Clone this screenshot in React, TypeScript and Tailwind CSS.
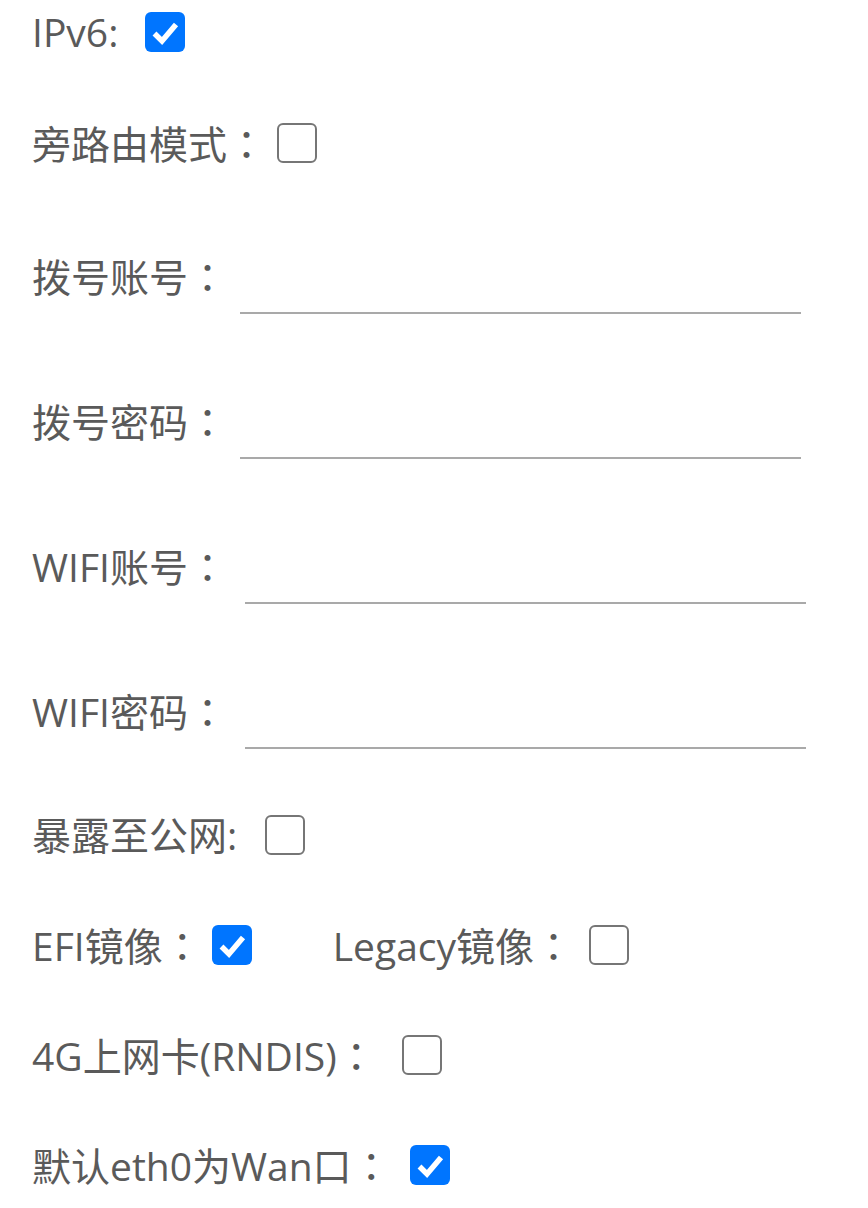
import React, { useState } from "react";

interface BoxProps {
  checked: boolean;
  onChange: () => void;
  className?: string;
}

function Box({ checked, onChange, className = "" }: BoxProps) {
  return (
    <button
      type="button"
      onClick={onChange}
      className={`inline-flex h-[40px] w-[40px] shrink-0 items-center justify-center rounded-[6px] ${
        checked ? "bg-[#0075ff]" : "border-[2.5px] border-[#767676] bg-white"
      } ${className}`}
    >
      {checked ? (
        <svg viewBox="0 0 40 40" className="h-[40px] w-[40px]" aria-hidden="true">
          <path
            d="M9.5 21.5 L17 29 L31 12.5"
            fill="none"
            stroke="#fff"
            strokeWidth="5.5"
            strokeLinejoin="miter"
          />
        </svg>
      ) : null}
    </button>
  );
}

// full-width colon drawn centred in its cell, like the original font does
const Colon = () => <span className="[font-family:'Noto_Sans_CJK_TC',sans-serif]">：</span>;

function TextRow({ label, labelWidth, className = "" }: { label: string; labelWidth: string; className?: string }) {
  return (
    <div className={`flex items-start ${className}`}>
      <span className={`leading-[44px] ${labelWidth}`}>
        {label}
        <Colon />
      </span>
      <input
        type="text"
        className="h-[61px] w-[561px] border-b-2 border-[#a9a9a9] bg-transparent outline-none"
      />
    </div>
  );
}

export default function App() {
  const [v, setV] = useState({
    ipv6: true,
    bypass: false,
    expose: false,
    efi: true,
    legacy: false,
    rndis: false,
    eth0: true,
  });
  const flip = (k: keyof typeof v) => setV((s) => ({ ...s, [k]: !s[k] }));

  return (
    <div className="flex min-h-[1208px] flex-col bg-white pl-[32px] pt-[10px] text-[39px] text-[#5a5a5a] [font-family:'Open_Sans','Noto_Sans_CJK_SC',sans-serif]">
      <div className="flex h-[44px] items-center">
        <span className="leading-[44px]">IPv6:</span>
        <Box checked={v.ipv6} onChange={() => flip("ipv6")} className="ml-[27px]" />
      </div>

      <div className="mt-[67px] flex h-[44px] items-center">
        <span className="leading-[44px]">
          旁路由模式
          <Colon />
        </span>
        <Box checked={v.bypass} onChange={() => flip("bypass")} className="ml-[11px]" />
      </div>

      <TextRow label="拨号账号" labelWidth="w-[208px]" className="mt-[88px]" />
      <TextRow label="拨号密码" labelWidth="w-[208px]" className="mt-[84px]" />
      <TextRow label="WIFI账号" labelWidth="w-[213px]" className="mt-[84px]" />
      <TextRow label="WIFI密码" labelWidth="w-[213px]" className="mt-[84px]" />

      <div className="mt-[64px] flex h-[44px] items-center">
        <span className="leading-[44px]">暴露至公网:</span>
        <Box checked={v.expose} onChange={() => flip("expose")} className="ml-[28px]" />
      </div>

      <div className="mt-[66px] flex h-[44px] items-center">
        <span className="leading-[44px]">
          EFI镜像
          <Colon />
        </span>
        <Box checked={v.efi} onChange={() => flip("efi")} className="ml-[10px]" />
        <span className="ml-[81px] leading-[44px]">
          Legacy镜像
          <Colon />
        </span>
        <Box checked={v.legacy} onChange={() => flip("legacy")} className="ml-[16px]" />
      </div>

      <div className="mt-[66px] flex h-[44px] items-center">
        <span className="leading-[44px]">
          4G上网卡(RNDIS)
          <Colon />
        </span>
        <Box checked={v.rndis} onChange={() => flip("rndis")} className="ml-[26px]" />
      </div>

      <div className="mt-[66px] flex h-[44px] items-center">
        <span className="leading-[44px]">
          默认eth0为Wan口
          <Colon />
        </span>
        <Box checked={v.eth0} onChange={() => flip("eth0")} className="ml-[19px]" />
      </div>
    </div>
  );
}
